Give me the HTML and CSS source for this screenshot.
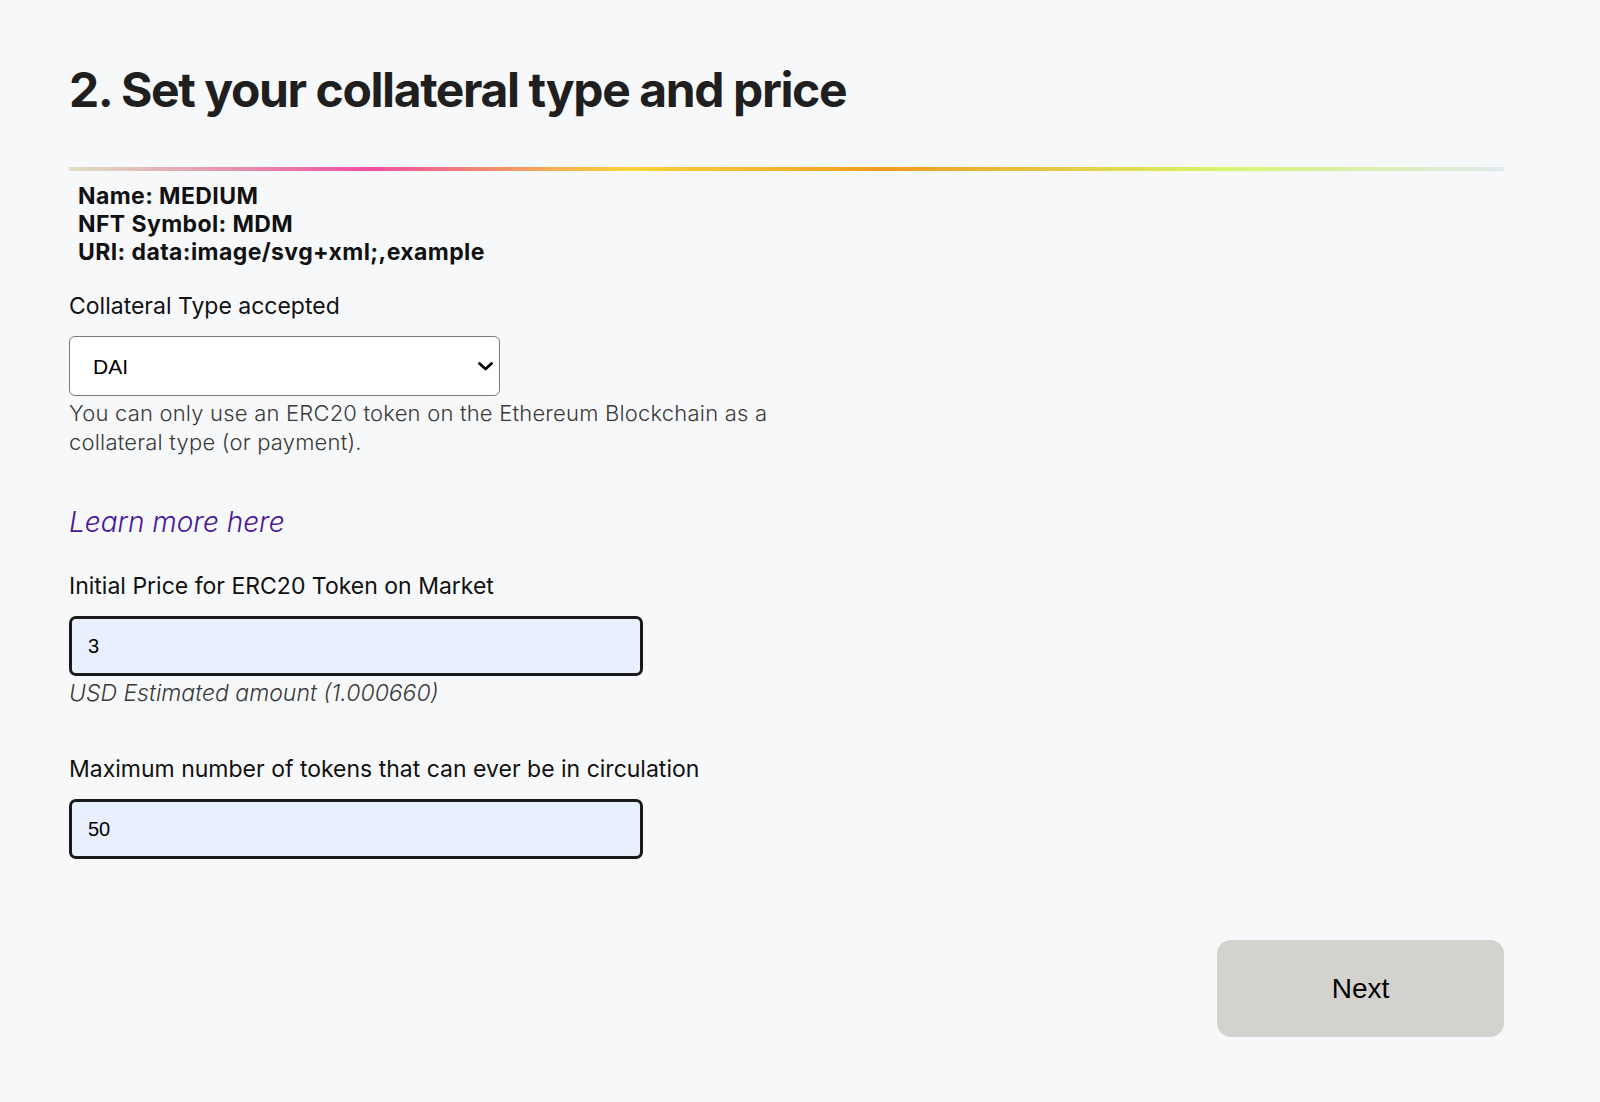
FILE: index.html
```html
<!DOCTYPE html>
<html lang="en">
<head>
    <meta charset="UTF-8">
    <meta name="viewport" content="width=device-width, initial-scale=1.0">
    <title>Create Token - Collateral</title>
    <link rel="stylesheet" href="styles.css">
</head>
<body>

    <div class="page">
        <h1>2. Set your collateral type and price</h1>

        <div class="rainbow"></div>

        <!-- Summary of step 1 -->
        <div class="summary">
            <div>Name: MEDIUM</div>
            <div>NFT Symbol: MDM</div>
            <div>URI: data:image/svg+xml;,example</div>
        </div>

        <form class="step-form">
            <div class="field">
                <label for="collateral">Collateral Type accepted</label>
                <div class="select-wrap">
                    <select id="collateral">
                        <option>DAI</option>
                        <option>USDC</option>
                        <option>WETH</option>
                    </select>
                    <svg class="chevron" width="15" height="9" viewBox="0 0 15 9">
                        <path d="M1.5 1.5 L7.5 7 L13.5 1.5" fill="none" stroke="#000" stroke-width="2.8" stroke-linecap="round" stroke-linejoin="round"/>
                    </svg>
                </div>
                <p class="help">You can only use an ERC20 token on the Ethereum Blockchain as a collateral type (or payment).</p>
            </div>

            <a class="learn-more" href="#">Learn more here</a>

            <div class="field">
                <label for="initial-price">Initial Price for ERC20 Token on Market</label>
                <input type="text" id="initial-price" value="3" />
                <p class="estimate">USD Estimated amount (1.000660)</p>
            </div>

            <div class="field">
                <label for="max-supply">Maximum number of tokens that can ever be in circulation</label>
                <input type="text" id="max-supply" value="50" />
            </div>

            <div class="actions">
                <button type="button" id="next-btn">Next</button>
            </div>
        </form>
    </div>

</body>
</html>
```

FILE: styles.css
```css
/* Global Styles */
body, html {
    margin: 0;
    padding: 0;
    background: #f7f8fa;
    font-family: Inter, "Noto Sans", sans-serif;
    color: #111;
}

.page {
    padding: 61px 96px 0 69px;
}

h1 {
    margin: 0;
    font-size: 48px;
    line-height: 58px;
    font-weight: 700;
    color: #1f1f1f;
    letter-spacing: -1.4px;
}

/* Gradient divider under the title */
.rainbow {
    height: 4px;
    margin-top: 48px;
    background: linear-gradient(90deg, #dfe0c2 0%, #ee4fa0 21%, #fbd338 39%, #f49a21 57%, #d6f56c 80%, #e2e9ee 100%);
}

.summary {
    margin-top: 11px;
    padding-left: 9px;
    font-size: 23px;
    line-height: 28px;
    font-weight: 700;
    letter-spacing: 0.4px;
}

/* Form */
.step-form {
    display: flex;
    flex-direction: column;
}

.field label {
    display: block;
    font-size: 23px;
    line-height: 28px;
    margin-bottom: 16px;
}

.field:first-child {
    margin-top: 26px;
}

.select-wrap {
    position: relative;
    width: 30%;
}

.select-wrap select {
    appearance: none;
    -webkit-appearance: none;
    width: 100%;
    height: 60px;
    box-sizing: border-box;
    padding: 0 40px 0 23px;
    border: 1px solid #7a7a7a;
    border-radius: 6px;
    background: #fff;
    font-family: "Liberation Sans", Arial, sans-serif;
    font-size: 21px;
    color: #000;
}

.chevron {
    position: absolute;
    right: 7px;
    top: 26px;
    pointer-events: none;
}

.help {
    margin: 3px 0 0;
    max-width: 50%;
    font-size: 22px;
    line-height: 29px;
    font-weight: 300;
    letter-spacing: 0.2px;
    color: #3a3a3a;
}

.learn-more {
    align-self: flex-start;
    margin-top: 49px;
    font-size: 28px;
    line-height: 32px;
    font-style: italic;
    font-weight: 300;
    color: #48169a;
    text-decoration: none;
}

.learn-more + .field {
    margin-top: 34px;
}

.field input {
    display: block;
    width: 40%;
    height: 60px;
    box-sizing: border-box;
    padding: 0 16px;
    border: 3px solid #1a1a1a;
    border-radius: 7px;
    background: #e8f0fe;
    font-family: "Liberation Sans", Arial, sans-serif;
    font-size: 20px;
    color: #000;
}

.estimate {
    margin: 3px 0 0;
    font-size: 23px;
    line-height: 28px;
    font-style: italic;
    font-weight: 300;
    color: #3a3a3a;
}

.field + .field {
    margin-top: 48px;
}

.actions {
    display: flex;
    justify-content: flex-end;
    margin-top: 81px;
}

.actions button {
    width: 20%;
    height: 97px;
    border: none;
    border-radius: 14px;
    background: #d4d2ce;
    font-family: "Liberation Sans", Arial, sans-serif;
    font-size: 28px;
    color: #000;
    cursor: pointer;
}
```
